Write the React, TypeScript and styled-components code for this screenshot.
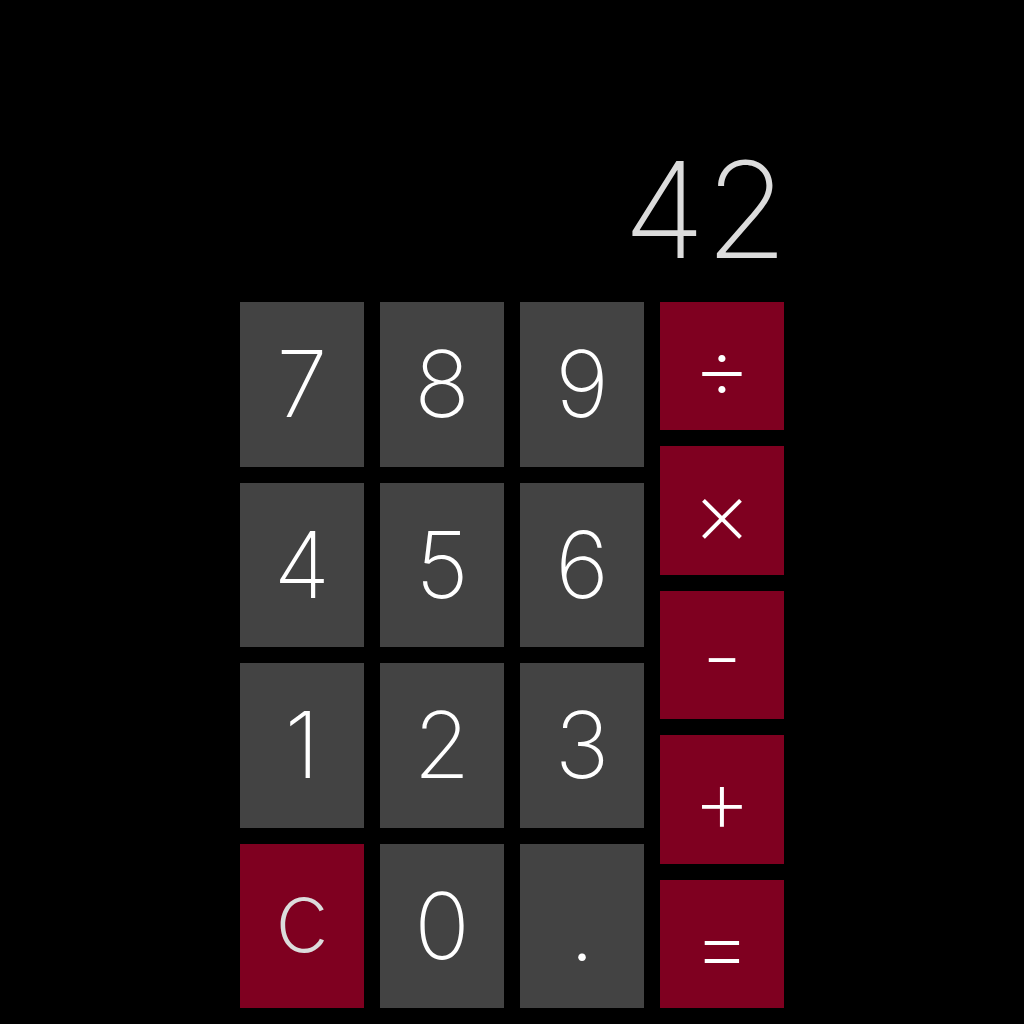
import * as React from "react";
import styled, { createGlobalStyle } from "styled-components";

const GlobalStyle = createGlobalStyle`
    html, body {
        margin: 0;
        padding: 0;
        background: #000;
    }
    body {
        font-family: Inter, "Liberation Sans", sans-serif;
    }
`;

const Page = styled.div`
    min-height: 100vh;
    display: flex;
    justify-content: center;
    background: #000;
`;

const Calculator = styled.div`
    width: 544px;
    padding-top: 142px;
    display: flex;
    flex-direction: column;
`;

const Display = styled.div`
    height: 135px;
    margin: 0 -4px 25px 0;
    font-size: 134px;
    line-height: 135px;
    font-weight: 200;
    color: #dcdcdc;
    text-align: right;
`;

const Keypad = styled.div`
    display: flex;
    gap: 16px;
    height: 706px;
`;

const DigitGrid = styled.div`
    display: grid;
    grid-template-columns: repeat(3, 124px);
    grid-template-rows: repeat(4, 1fr);
    gap: 16px;
`;

const OpColumn = styled.div`
    display: grid;
    grid-template-columns: 124px;
    grid-template-rows: repeat(5, 1fr);
    gap: 16px;
`;

const Key = styled.button<{ $accent?: boolean; $dim?: boolean; $size?: number; $shift?: number }>`
    border: none;
    padding: 0;
    margin: 0;
    display: flex;
    align-items: center;
    justify-content: center;
    background: ${p => (p.$accent ? "#7f0020" : "#434343")};
    color: ${p => (p.$dim ? "#dcdcdc" : "#fff")};
    font-family: Inter, "Liberation Sans", sans-serif;
    font-size: ${p => p.$size ?? 92}px;
    font-weight: 250;
    line-height: 1;
    padding-top: ${p => Math.max(p.$shift ?? 0, 0)}px;
    padding-bottom: ${p => Math.max(-(p.$shift ?? 0), 0)}px;
    cursor: pointer;
`;

const digits = ["7", "8", "9", "4", "5", "6", "1", "2", "3"];
const ops = ["÷", "×", "-", "+", "="];

export default function App() {
    return <Page>
        <GlobalStyle />
        <Calculator>
            <Display>42</Display>
            <Keypad>
                <DigitGrid>
                    {digits.map(d => <Key key={d}>{d}</Key>)}
                    <Key $accent $dim $size={100} $shift={-20}>c</Key>
                    <Key>0</Key>
                    <Key $size={96}>.</Key>
                </DigitGrid>
                <OpColumn>
                    {ops.map(o => <Key key={o} $accent $size={92} $shift={2}>{o}</Key>)}
                </OpColumn>
            </Keypad>
        </Calculator>
    </Page>;
}
